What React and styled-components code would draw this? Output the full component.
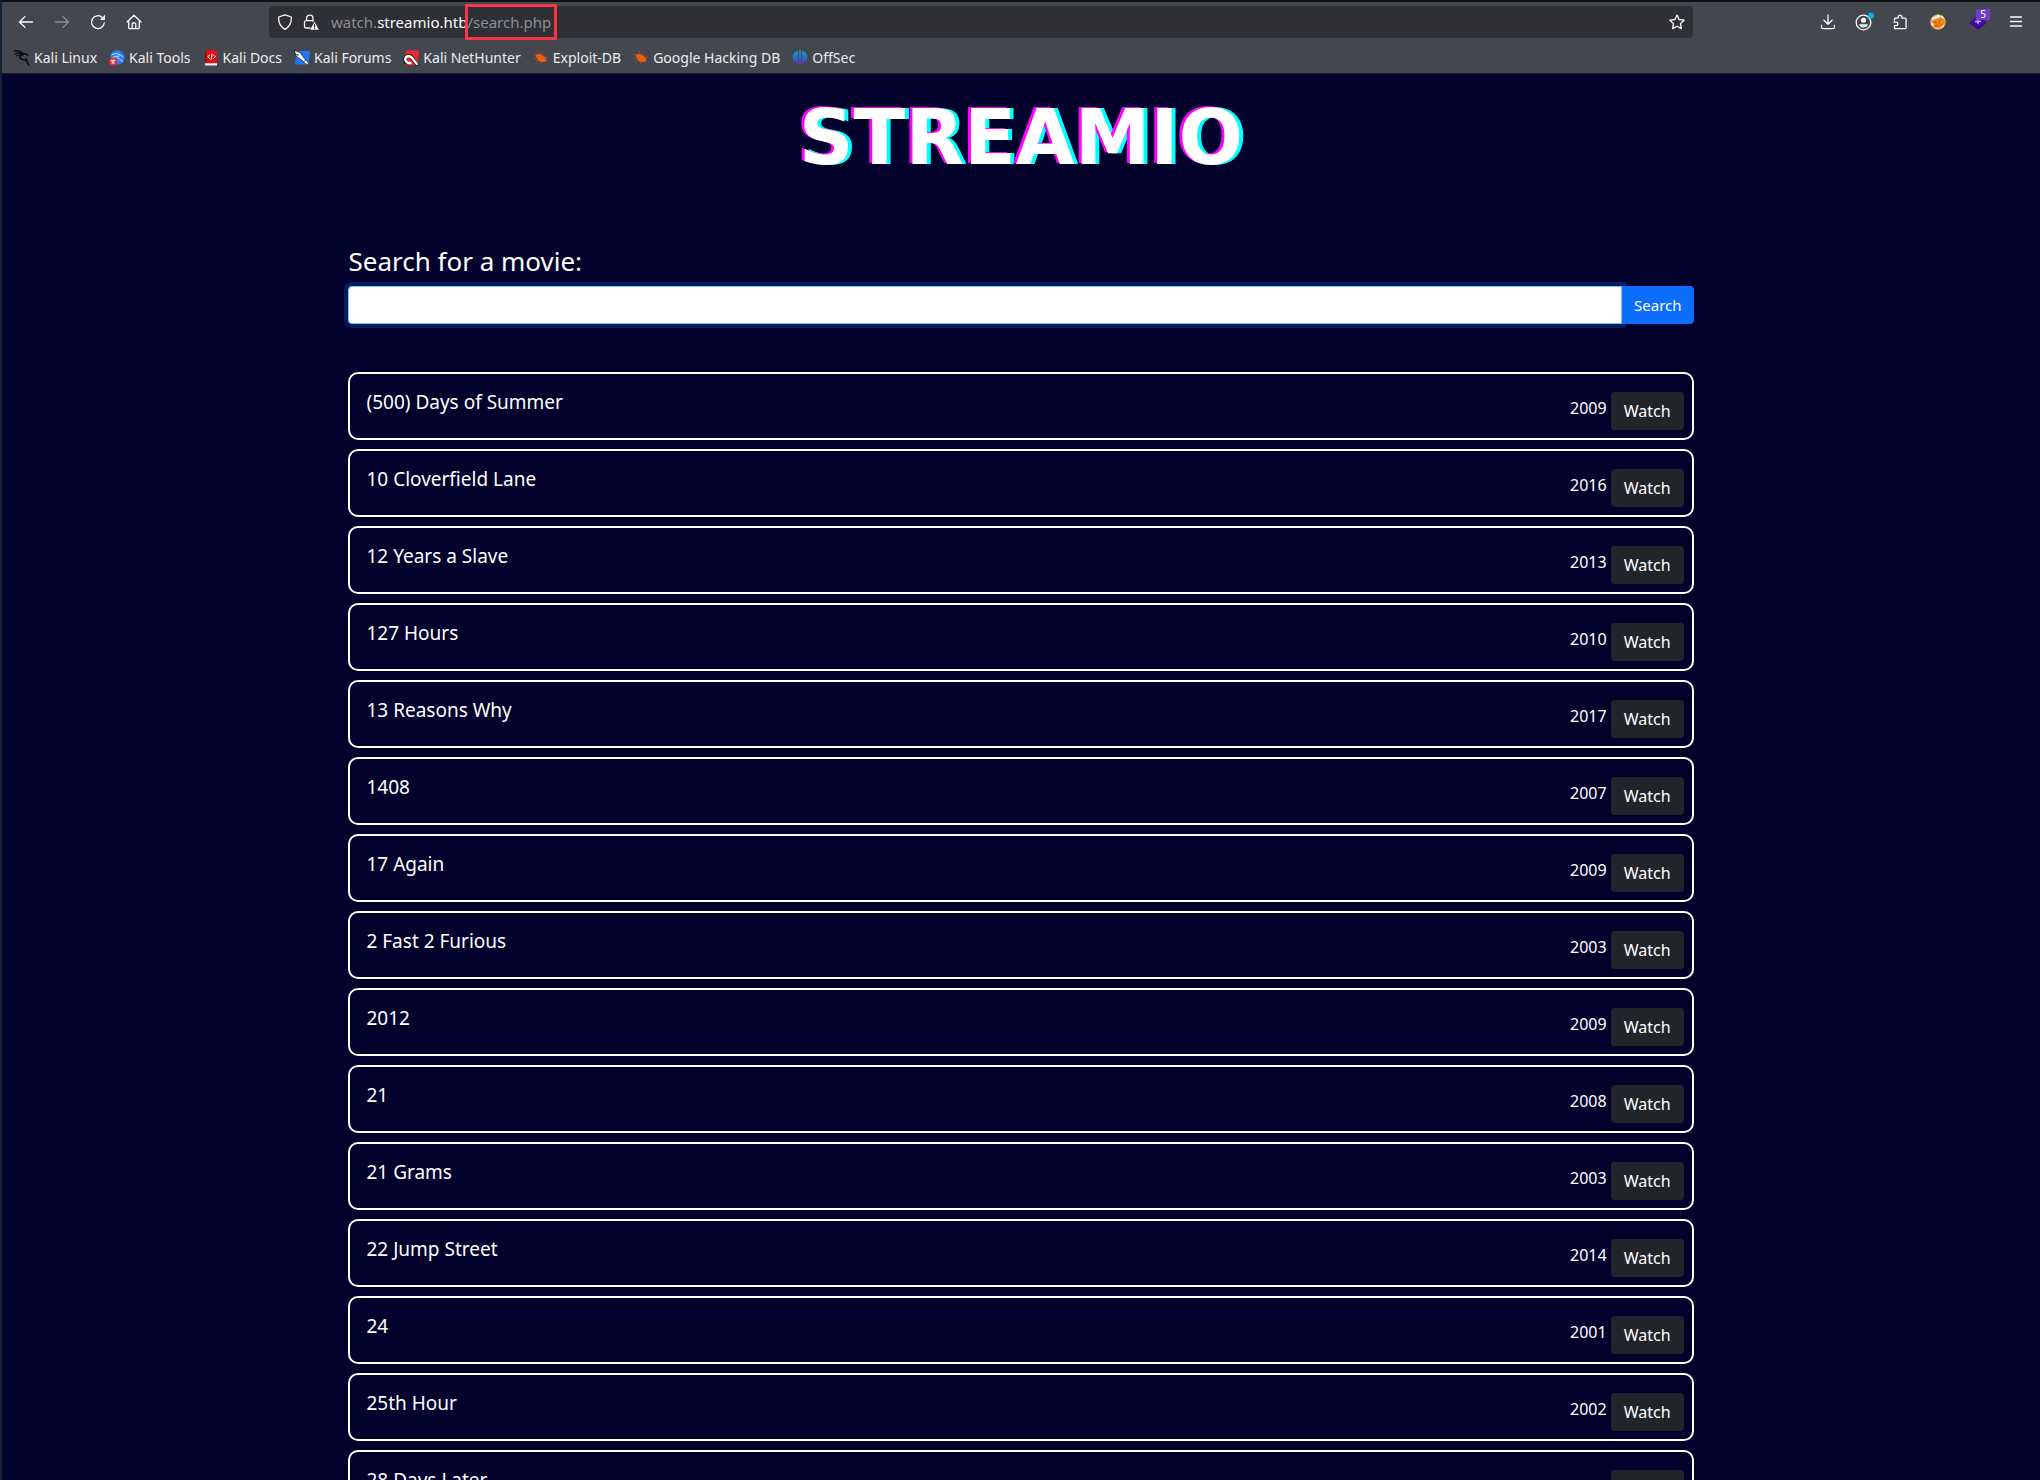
import { useState } from 'react';
import styled, { createGlobalStyle } from 'styled-components';

const GlobalStyle = createGlobalStyle`
  * {
    box-sizing: border-box;
  }
  body {
    margin: 0;
    background: #02022d;
    font-family: 'Noto Sans', 'Open Sans', sans-serif;
  }
  button,
  input {
    font-family: inherit;
  }
`;

const StyledWindow = styled.div`
  height: 100vh;
  overflow: hidden;
  display: flex;
  flex-direction: column;
  border-top: 2px solid #0f1014;
  border-left: 2px solid #132333;
  color: #fff;
`;

const StyledChrome = styled.header`
  flex: none;
  background: #44474e;
  color: #fbfbfe;
  border-bottom: 1px solid #1c1c28;
`;

const StyledToolbar = styled.div`
  display: flex;
  align-items: center;
  height: 40px;
  padding: 0 6px;
`;

const StyledSpacer = styled.div`
  flex: 0 1 117px;
`;

const StyledToolButton = styled.button`
  position: relative;
  display: flex;
  align-items: center;
  justify-content: center;
  flex: none;
  width: ${props => (props.$wide ? '40px' : '36px')};
  height: 32px;
  padding: 0;
  border: 0;
  background: none;
  color: inherit;
  opacity: ${props => (props.disabled ? 0.4 : 1)};
`;

const StyledBadge = styled.span`
  position: absolute;
  top: 3px;
  right: 8px;
  width: 14px;
  height: 11px;
  background: #6d3fc4;
  font-size: 10px;
  line-height: 11px;
  text-align: center;
`;

const StyledUrlBar = styled.div`
  flex: 1;
  display: flex;
  align-items: center;
  gap: 10px;
  height: 32px;
  padding: 0 8px;
  border-radius: 4px;
  background: #2e3036;
`;

const StyledUrl = styled.div`
  flex: 1;
  padding-left: 2px;
  font-size: 15px;
  line-height: 20px;
  color: #8c8d92;
  & strong {
    font-weight: 400;
    color: #fbfbfe;
  }
`;

const StyledPath = styled.span`
  position: relative;
  &::after {
    content: '';
    position: absolute;
    inset: -8px -6px -8px -2px;
    border: 3px solid #fa3545;
    border-radius: 1px;
  }
`;

const StyledBookmarks = styled.nav`
  display: flex;
  align-items: center;
  gap: 12px;
  height: 30px;
  padding: 0 12px;
  margin-top: 1px;
`;

const StyledBookmark = styled.a`
  display: flex;
  align-items: center;
  gap: 4px;
  color: #ececf0;
  font-size: 14px;
  line-height: 20px;
  text-decoration: none;
  white-space: nowrap;
`;

const StyledPage = styled.main`
  flex: 1;
  min-height: 0;
  overflow: hidden;
  background: #02022d;
`;

const StyledLogo = styled.h1`
  margin: 0;
  padding: 18px 0 60px 0;
  font-family: 'DejaVu Sans', sans-serif;
  font-weight: 700;
  font-size: 76px;
  line-height: 92px;
  text-align: center;
  text-shadow: -3px -1px 0 #f0f, 4px 0 0 #0ff;
`;

const StyledContainer = styled.div`
  width: 66%;
  margin: 0 auto;
`;

const StyledLabel = styled.label`
  display: block;
  margin-bottom: 8px;
  font-size: 26px;
  line-height: 34px;
`;

const StyledInputGroup = styled.div`
  display: flex;
  margin-bottom: 48px;
`;

const StyledInput = styled.input`
  flex: 1;
  height: 38px;
  padding: 6px 12px;
  border: 1px solid #86b7fe;
  border-radius: 4px 0 0 4px;
  background: #fff;
  font-size: 16px;
  outline: 0;
  box-shadow: 0 0 0 4px rgba(13, 110, 253, 0.25);
`;

const StyledButton = styled.button`
  position: relative;
  height: 38px;
  padding: 0 ${props => (props.$primary ? '12px' : '13px')};
  border: 0;
  border-radius: ${props => (props.$primary ? '0 4px 4px 0' : '4px')};
  background: ${props => (props.$primary ? '#0d6efd' : '#212529')};
  color: #fff;
  font-size: ${props => (props.$primary ? '15px' : '16px')};
  line-height: 24px;
`;

const StyledMovieList = styled.ul`
  display: flex;
  flex-direction: column;
  gap: 9px;
  margin: 0;
  padding: 0;
  list-style: none;
`;

const StyledMovie = styled.li`
  display: flex;
  justify-content: space-between;
  align-items: flex-start;
  height: 68px;
  padding: 16px 8px 8px 16px;
  border: 2px solid #fff;
  border-radius: 10px;
`;

const StyledMovieTitle = styled.h2`
  margin: 0;
  font-weight: 400;
  font-size: 19px;
  line-height: 24px;
`;

const StyledMovieActions = styled.div`
  display: flex;
  align-items: center;
  gap: 4px;
  padding-top: 2px;
  font-size: 16px;
  line-height: 24px;
`;

const StyledYear = styled.span`
  padding-bottom: 6px;
`;

const Icon = ({ size = 16, box = 16, children }) => (
  <svg
    width={size}
    height={size}
    viewBox={`0 0 ${box} ${box}`}
    fill='none'
    stroke='currentColor'
    strokeWidth='1.3'
    strokeLinecap='round'
    strokeLinejoin='round'
    aria-hidden='true'
  >
    {children}
  </svg>
);

const BackIcon = () => (
  <Icon>
    <path d='M14.5 8H1.8M7 2.6 1.5 8 7 13.4' />
  </Icon>
);

const ForwardIcon = () => (
  <Icon>
    <path d='M1.5 8h12.7M9 2.6 14.5 8 9 13.4' />
  </Icon>
);

const ReloadIcon = () => (
  <Icon>
    <path d='M14.3 9A6.4 6.4 0 1 1 12.3 3.4' />
    <path d='M15 .8v5.1H9.9z' fill='currentColor' stroke='none' />
  </Icon>
);

const HomeIcon = () => (
  <Icon>
    <path d='M1 8 8 1.2 15 8M2.7 6.8v6.9a1 1 0 0 0 1 1h8.6a1 1 0 0 0 1-1V6.8M6.2 14.5V10a1 1 0 0 1 1-1h1.6a1 1 0 0 1 1 1v4.5' />
  </Icon>
);

const ShieldIcon = () => (
  <Icon>
    <path d='M8 .9 14.3 3c.4 6-1.9 10-6.3 12.3C3.6 13 1.3 9 1.7 3z' />
  </Icon>
);

const LockIcon = () => (
  <Icon>
    <path d='M7 14H3a1.5 1.5 0 0 1-1.5-1.5V8.2A1.5 1.5 0 0 1 3 6.7h7M3.600 6.500V4.300a3.200 3.200 0 0 1 6.400 0v3' />
    <path d='m11.5 7.5 4.3 8.2H7.2z' fill='currentColor' stroke='none' />
    <path d='M11.5 10.5v2.2M11.5 14.3v.1' stroke='#2e3036' />
  </Icon>
);

const StarIcon = () => (
  <Icon>
    <path d='m8 1 2.1 4.5 5 .7-3.6 3.4.9 5L8 12.2l-4.4 2.4.9-5L.9 6.200l5-.7z' />
  </Icon>
);

const DownloadIcon = () => (
  <Icon>
    <path d='M8 .9v9.2M3.9 6.2 8 10.3l4.1-4.1M1.500 11.500V13a1.600 1.600 0 0 0 1.600 1.600h9.800a1.600 1.600 0 0 0 1.600-1.600v-1.500' />
  </Icon>
);

const AccountIcon = () => (
  <Icon size={20} box={20}>
    <circle cx='9.5' cy='10.5' r='7.3' />
    <circle cx='9.5' cy='8.3' r='2.5' fill='currentColor' stroke='none' />
    <path
      d='M5.2 12.2h8.600c-.2 2.200-2 3.300-4.300 3.300s-4.100-1.100-4.300-3.300z'
      fill='currentColor'
      stroke='none'
    />
    <circle cx='17' cy='3.5' r='3' fill='#00b3f4' stroke='none' />
  </Icon>
);

const PuzzleIcon = () => (
  <Icon>
    <path d='M2.5 6.200V4.900a.8.8 0 0 1 .8-.8h2.900V2.700a1.900 1.900 0 0 1 3.700 0v1.400h3a1.200 1.200 0 0 1 1.200 1.200v8.200a1.200 1.200 0 0 1-1.200 1.200H3.300a.8.8 0 0 1-.8-.8v-2.200h1.600a1.800 1.800 0 0 0 0-3.600H1.800' />
  </Icon>
);

const FoxIcon = () => (
  <Icon>
    <circle cx='8' cy='8' r='7.6' fill='#efeae2' stroke='none' />
    <circle cx='8' cy='8' r='7' stroke='#f0951e' strokeWidth='1.2' strokeDasharray='3 4' />
    <path
      d='M1 7 5 5l4-1 3-2 1 2.500 2 2-.5 3-3 3.500-4 1.500-4-2 .5-2.500z'
      fill='#ef8a10'
      stroke='none'
    />
    <path d='m3.500 8 3 .8M10.500 6 8.500 8.500l1.800 2M5 12l3-.8' stroke='#7a450f' strokeWidth='.8' />
    <path d='m10.500 2.500 2-1 .6 3z' fill='#fff' stroke='none' />
  </Icon>
);

const DiamondIcon = () => (
  <Icon>
    <path d='m8 3.5 8 4.500v1.600L8 15.600 0 9.600V8z' fill='#2a078d' stroke='none' />
    <path d='m8 1.5 8 6.200-8 5.800-8-5.800z' fill='#4608ad' stroke='none' />
    <path d='M5.5 7.500h5M8 5.600v3.800' stroke='#c3b0e8' strokeWidth='1.5' />
  </Icon>
);

const MenuIcon = () => (
  <Icon>
    <path d='M2.5 3h11M2.5 7.500h11M2.500 12h11' />
  </Icon>
);

const KaliLinuxIcon = () => (
  <Icon>
    <path
      d='M.5.8C4 .5 7 1.500 9 3.200M1 3.800c3-1 6-.8 8.500.4M2.500 6c2.200-1.200 4.500-1.300 6.500-1M9.500 3.500c1.800 0 3 .5 4.200 1.800M9 4.500C5.300 5.300 5 8 7.500 9c3 1 5.800 1.500 6.500 4.500l.8 1.800M13 10.500l-1-2'
      stroke='#08090b'
      strokeWidth='1.4'
    />
  </Icon>
);

const KaliToolsIcon = () => (
  <Icon>
    <circle cx='8.5' cy='7.5' r='7.2' fill='#2b7cf7' stroke='none' />
    <path
      d='M3 4.500c3-1.500 6-1 8 .3M4 7.500c2-1.300 4-1.500 6-1.300M10.500 5c1.500 0 2.500.8 3 2M9 6.500c-1.500 2 1 2.500 3 3.300l1.200 2'
      stroke='#cde1ff'
      strokeWidth='1'
    />
    <circle cx='4' cy='11.7' r='4' fill='#ee2434' stroke='none' />
    <path d='M2.200 10.300h3.600M3.200 10.500v3M4.900 10.500v3' stroke='#fff' strokeWidth='1' />
  </Icon>
);

const KaliDocsIcon = () => (
  <Icon>
    <path d='M2 1.500 3.500 0H14v13.500H2z' fill='#e01217' stroke='none' />
    <path d='M2 1.500 3.500 0v13H2z' fill='#96090e' stroke='none' />
    <path d='M2 13.300h12v2.200H3a1 1 0 0 1-1-1z' fill='#eee' stroke='none' />
    <path d='m6.500 5-1.700 1.800 1.700 1.700M10.500 5l1.700 1.800-1.700 1.700M9 4.200 8 9.300' stroke='#fff' strokeWidth='1' />
  </Icon>
);

const KaliForumsIcon = () => (
  <Icon>
    <path d='M2.500 1H16l-1.500 13.500H1z' fill='#1c78f4' stroke='none' />
    <path
      d='m.5.5 5.800 2.200 4 5.800 3.500 3.500 1.200 3.500-3.600-2L7.500 10 2.300 6z'
      fill='#fff'
      stroke='#17191e'
      strokeWidth='.7'
    />
    <path d='m1.500 4.500 3 .5M10 11.500l1.500-1.500' stroke='#17191e' strokeWidth='.8' />
  </Icon>
);

const NetHunterIcon = () => (
  <Icon>
    <path d='M3 .5h13l-1.500 14.500H1z' fill='#ee2733' stroke='none' />
    <path
      d='M2.800 12.500C.8 8.500 3.500 5.500 6.500 6c2.500.5 3.500 2.500 4.500 4.500l2.800 3.300'
      stroke='#17191e'
      strokeWidth='4'
    />
    <path
      d='M4.800 12.800C.8 10.500 2 6.500 5.500 6.300c3-.1 4.300 2 5.500 4.200l2.800 3.300M4.800 12.800l2.700.2'
      stroke='#fff'
      strokeWidth='2.4'
    />
  </Icon>
);

const BugIcon = () => (
  <Icon>
    <path
      d='M2.500 5c1.500-1 3-1.200 4.500-.5 2.500.2 4.300 1.300 5.300 3.300l1.700 3.200-2.500.8C8 12.500 5 11.500 4 8.500z'
      fill='#ee5d13'
      stroke='none'
    />
    <path
      d='M4 5 .8 4.300M4 7.500.8 8.500M5.500 9.700 3 12M7.500 4.500 6 1.700M9.500 5.300l.2-2.600M12 7.500l3.300-.3M9 11.500l-1.200 2.300'
      stroke='#b84e1b'
      strokeWidth='.8'
    />
  </Icon>
);

const OffSecIcon = () => (
  <Icon>
    <defs>
      <linearGradient id='offsec' x1='0' y1='0' x2='0' y2='1'>
        <stop offset='0' stopColor='#0ca5b8' />
        <stop offset='.5' stopColor='#2b6ccb' />
        <stop offset='1' stopColor='#6b20d5' />
      </linearGradient>
    </defs>
    <path
      d='M6 .7v12.600C2.500 12.500.5 10.500.5 7.200.5 4 2.500 1.500 6 .7zM7.200.2h1.600l.6 15.300H6.600zM10 .7c3.500.8 5.500 3.300 5.500 6.500s-2 5.300-5.500 6.100z'
      fill='url(#offsec)'
      stroke='none'
    />
  </Icon>
);

const bookmarks = [
  { name: 'Kali Linux', icon: KaliLinuxIcon },
  { name: 'Kali Tools', icon: KaliToolsIcon },
  { name: 'Kali Docs', icon: KaliDocsIcon },
  { name: 'Kali Forums', icon: KaliForumsIcon },
  { name: 'Kali NetHunter', icon: NetHunterIcon },
  { name: 'Exploit-DB', icon: BugIcon },
  { name: 'Google Hacking DB', icon: BugIcon },
  { name: 'OffSec', icon: OffSecIcon },
];

const movies = [
  { title: '(500) Days of Summer', year: 2009 },
  { title: '10 Cloverfield Lane', year: 2016 },
  { title: '12 Years a Slave', year: 2013 },
  { title: '127 Hours', year: 2010 },
  { title: '13 Reasons Why', year: 2017 },
  { title: '1408', year: 2007 },
  { title: '17 Again', year: 2009 },
  { title: '2 Fast 2 Furious', year: 2003 },
  { title: '2012', year: 2009 },
  { title: '21', year: 2008 },
  { title: '21 Grams', year: 2003 },
  { title: '22 Jump Street', year: 2014 },
  { title: '24', year: 2001 },
  { title: '25th Hour', year: 2002 },
  { title: '28 Days Later', year: 2002 },
];

const BrowserChrome = () => (
  <StyledChrome>
    <StyledToolbar>
      <StyledToolButton aria-label='Back'>
        <BackIcon />
      </StyledToolButton>
      <StyledToolButton aria-label='Forward' disabled>
        <ForwardIcon />
      </StyledToolButton>
      <StyledToolButton aria-label='Reload'>
        <ReloadIcon />
      </StyledToolButton>
      <StyledToolButton aria-label='Home'>
        <HomeIcon />
      </StyledToolButton>
      <StyledSpacer />
      <StyledUrlBar>
        <ShieldIcon />
        <LockIcon />
        <StyledUrl>
          watch.<strong>streamio.htb</strong>
          <StyledPath>/search.php</StyledPath>
        </StyledUrl>
        <StarIcon />
      </StyledUrlBar>
      <StyledSpacer />
      <StyledToolButton aria-label='Downloads'>
        <DownloadIcon />
      </StyledToolButton>
      <StyledToolButton aria-label='Account'>
        <AccountIcon />
      </StyledToolButton>
      <StyledToolButton aria-label='Extensions'>
        <PuzzleIcon />
      </StyledToolButton>
      <StyledToolButton aria-label='Proxy' $wide>
        <FoxIcon />
      </StyledToolButton>
      <StyledToolButton aria-label='Site technologies' $wide>
        <DiamondIcon />
        <StyledBadge>5</StyledBadge>
      </StyledToolButton>
      <StyledToolButton aria-label='Menu'>
        <MenuIcon />
      </StyledToolButton>
    </StyledToolbar>
    <StyledBookmarks>
      {bookmarks.map(({ name, icon: BookmarkIcon }) => (
        <StyledBookmark key={name} href='#'>
          <BookmarkIcon />
          {name}
        </StyledBookmark>
      ))}
    </StyledBookmarks>
  </StyledChrome>
);

const App = () => {
  const [query, setQuery] = useState('');
  return (
    <>
      <GlobalStyle />
      <StyledWindow>
        <BrowserChrome />
        <StyledPage>
          <StyledLogo>STREAMIO</StyledLogo>
          <StyledContainer>
            <form onSubmit={e => e.preventDefault()}>
              <StyledLabel htmlFor='search'>Search for a movie:</StyledLabel>
              <StyledInputGroup>
                <StyledInput
                  id='search'
                  type='text'
                  value={query}
                  onChange={e => setQuery(e.target.value)}
                />
                <StyledButton type='submit' $primary>
                  Search
                </StyledButton>
              </StyledInputGroup>
            </form>
            <StyledMovieList>
              {movies.map(movie => (
                <StyledMovie key={movie.title}>
                  <StyledMovieTitle>{movie.title}</StyledMovieTitle>
                  <StyledMovieActions>
                    <StyledYear>{movie.year}</StyledYear>
                    <StyledButton type='button'>Watch</StyledButton>
                  </StyledMovieActions>
                </StyledMovie>
              ))}
            </StyledMovieList>
          </StyledContainer>
        </StyledPage>
      </StyledWindow>
    </>
  );
};

export default App;
